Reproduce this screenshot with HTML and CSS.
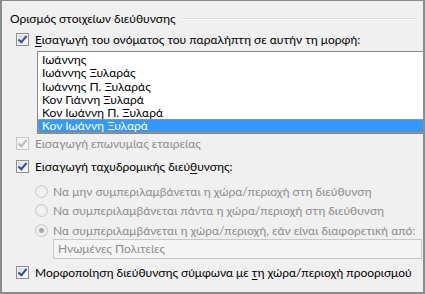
FILE: index.html
```html
<!DOCTYPE html>
<html>
<head>
<meta charset="utf-8">
<link rel="stylesheet" href="styles.css">
</head>
<body>
<div class="frame">
  <div class="group-title">
    <span>Ορισμός στοιχείων διεύθυνσης</span>
    <span class="etch"></span>
  </div>

  <div class="row check-row first">
    <span class="cb checked"></span>
    <span><u>Ε</u>ισαγωγή του ονόματος του παραλήπτη σε αυτήν τη μορφή:</span>
  </div>

  <div class="listbox">
    <div class="item">Ιωάννης</div>
    <div class="item">Ιωάννης Ξυλαράς</div>
    <div class="item">Ιωάννης Π. Ξυλαράς</div>
    <div class="item">Κον Γιάννη Ξυλαρά</div>
    <div class="item">Κον Ιωάννη Π. Ξυλαρά</div>
    <div class="item selected">Κον Ιωάννη Ξυλαρά</div>
  </div>

  <div class="row check-row disabled company">
    <span class="cb checked dis"></span>
    <span>Εισαγωγή επωνυμίας εταιρείας</span>
  </div>

  <div class="row check-row postal">
    <span class="cb checked"></span>
    <span>Εισαγωγή ταχυδρομικής διεύ<u>θ</u>υνσης:</span>
  </div>

  <div class="radios">
    <div class="row radio-row disabled">
      <span class="rb"></span>
      <span>Να μην συμπεριλαμβάνεται η χώρα/περιοχή στη διεύθυνση</span>
    </div>
    <div class="row radio-row disabled">
      <span class="rb"></span>
      <span>Να συμπεριλαμβάνεται πάντα η χώρα/περιοχή στη διεύθυνση</span>
    </div>
    <div class="row radio-row disabled">
      <span class="rb on"></span>
      <span>Να συμπεριλαμβάνεται η χώρα/περιοχή, εάν είναι διαφορετική από:</span>
    </div>
  </div>
  <div class="combo">Ηνωμένες Πολιτείες</div>

  <div class="row check-row last">
    <span class="cb checked"></span>
    <span>Μορφοποίηση διεύθυνσης σύμφωνα με <u>τ</u>η χώρα/περιοχή προορισμού</span>
  </div>
</div>
</body>
</html>
```

FILE: styles.css
```css
html, body {
  margin: 0;
  padding: 0;
}
body {
  width: 425px;
  height: 294px;
  overflow: hidden;
  background: #f0f0f0;
}
.frame {
  box-sizing: border-box;
  width: 425px;
  height: 294px;
  border: 1px solid #8c8c8c;
  border-left-width: 2px;
  border-right-width: 2px;
  border-bottom-width: 2px;
  background: #f0f0f0;
  padding: 9px 0 0 8px;
  font-family: "Lato", "Liberation Sans", sans-serif;
  font-size: 12px;
  color: #000;
  overflow: hidden;
}
u {
  text-decoration: underline;
  text-underline-offset: 2px;
}
.group-title {
  display: flex;
  align-items: center;
  gap: 6px;
  height: 16px;
  padding-right: 7px;
}
.etch {
  flex: 1;
  height: 1px;
  background: #d5dfe5;
  border-bottom: 1px solid #fff;
  margin-top: 2px;
}
.row {
  display: flex;
  align-items: center;
  gap: 6px;
  height: 16px;
  white-space: nowrap;
}
.check-row {
  margin-left: 6px;
}
.check-row.first {
  margin-top: 5px;
}
.cb {
  box-sizing: border-box;
  width: 13px;
  height: 13px;
  border: 1px solid #8e8f8f;
  background: linear-gradient(135deg, #d8d8d8, #fbfbfb);
  box-shadow: inset 0 0 0 1px #f4f4f4;
  position: relative;
  flex: none;
}
.cb.checked::after {
  content: "";
  position: absolute;
  left: 3px;
  top: 0px;
  width: 3px;
  height: 7px;
  border: solid #2f4fa8;
  border-width: 0 2px 2px 0;
  transform: rotate(40deg);
}
.cb.dis {
  border-color: #c6c6c6;
  background: #f4f4f4;
  box-shadow: none;
}
.cb.dis::after {
  border-color: #bcbcbc;
}
.listbox {
  box-sizing: border-box;
  margin: 4px 0 0 27px;
  width: 395px;
  height: 83px;
  border: 1px solid #828790;
  border-right: none;
  background: #fff;
  padding: 1px 0 0 0;
}
.item {
  height: 13.3px;
  line-height: 13.3px;
  padding-left: 4px;
  white-space: nowrap;
}
.item.selected {
  background: #3399ff;
  color: #fff;
  outline: 1px dotted #ff8c00;
  outline-offset: -1px;
}
.disabled {
  color: #8d8d8d;
}
.company {
  margin-top: 1px;
}
.postal {
  margin-top: 7px;
}
.radios {
  margin: 9px 0 0 25px;
  display: flex;
  flex-direction: column;
  gap: 3.5px;
}
.radio-row {
  gap: 5px;
}
.rb {
  box-sizing: border-box;
  width: 13px;
  height: 13px;
  border-radius: 50%;
  border: 1px solid #c8c8c8;
  background: radial-gradient(circle, #f6f6f6, #e6e6e6);
  flex: none;
  position: relative;
}
.rb.on::after {
  content: "";
  position: absolute;
  left: 3px;
  top: 3px;
  width: 5px;
  height: 5px;
  border-radius: 50%;
  background: #a8a8a8;
}
.combo {
  box-sizing: border-box;
  margin: 1px 0 0 43px;
  width: 369px;
  height: 20px;
  border: 1px solid #c8c8c8;
  background: #f4f4f4;
  color: #8d8d8d;
  padding-left: 4px;
  line-height: 18px;
}
.check-row.last {
  margin-top: 5px;
}
```
